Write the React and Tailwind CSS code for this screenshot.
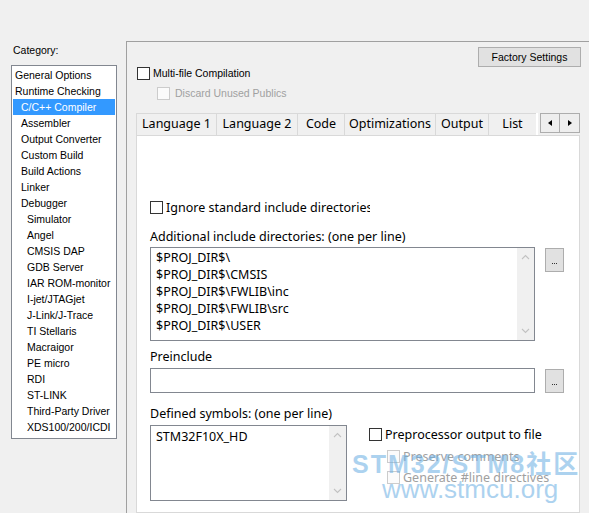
import React from 'react';

const categories = [
  { label: 'General Options', level: 0 },
  { label: 'Runtime Checking', level: 0 },
  { label: 'C/C++ Compiler', level: 1, selected: true },
  { label: 'Assembler', level: 1 },
  { label: 'Output Converter', level: 1 },
  { label: 'Custom Build', level: 1 },
  { label: 'Build Actions', level: 1 },
  { label: 'Linker', level: 1 },
  { label: 'Debugger', level: 1 },
  { label: 'Simulator', level: 2 },
  { label: 'Angel', level: 2 },
  { label: 'CMSIS DAP', level: 2 },
  { label: 'GDB Server', level: 2 },
  { label: 'IAR ROM-monitor', level: 2 },
  { label: 'I-jet/JTAGjet', level: 2 },
  { label: 'J-Link/J-Trace', level: 2 },
  { label: 'TI Stellaris', level: 2 },
  { label: 'Macraigor', level: 2 },
  { label: 'PE micro', level: 2 },
  { label: 'RDI', level: 2 },
  { label: 'ST-LINK', level: 2 },
  { label: 'Third-Party Driver', level: 2 },
  { label: 'XDS100/200/ICDI', level: 2 },
];

const tabs = [
  { label: 'Language 1', w: 'w-[80px]' },
  { label: 'Language 2', w: 'w-[81px]' },
  { label: 'Code', w: 'w-[47px]' },
  { label: 'Optimizations', w: 'w-[91px]' },
  { label: 'Output', w: 'w-[53px]' },
  { label: 'List', w: 'w-[48px]' },
];

const includeDirs = [
  '$PROJ_DIR$\\',
  '$PROJ_DIR$\\CMSIS',
  '$PROJ_DIR$\\FWLIB\\inc',
  '$PROJ_DIR$\\FWLIB\\src',
  '$PROJ_DIR$\\USER',
];

const indent = ['pl-[2px]', 'pl-[8px]', 'pl-[14px]'];

const Box = ({ disabled }) => (
  <span
    className={
      disabled
        ? 'block w-[13px] h-[13px] shrink-0 border border-[#cccccc] bg-[#fbfbfb]'
        : 'block w-[13px] h-[13px] shrink-0 border border-[#333333] bg-white'
    }
  />
);

const Chevron = ({ up }) => (
  <svg width="9" height="6" viewBox="0 0 9 6">
    <polyline
      points={up ? '1,5 4.5,1.5 8,5' : '1,1 4.5,4.5 8,1'}
      fill="none"
      stroke="#c2c2c2"
      strokeWidth="1.1"
    />
  </svg>
);

const ScrollBar = () => (
  <div className="w-[17px] h-full bg-[#f0f0f0] flex flex-col items-center justify-between py-[6px]">
    <Chevron up />
    <Chevron />
  </div>
);

// the browse button with its three small dots
const DotsButton = () => (
  <button className="w-[19px] h-[24px] shrink-0 border border-[#adadad] bg-[#e1e1e1] flex items-end justify-center gap-[1px] pb-[7px]">
    <span className="block w-[1px] h-[1px] bg-[#333]" />
    <span className="block w-[1px] h-[1px] bg-[#333]" />
    <span className="block w-[1px] h-[1px] bg-[#333]" />
  </button>
);

const App = () => {
  return (
    <div className="relative w-[589px] h-[513px] overflow-hidden bg-[#f0f0f0] flex font-['Liberation_Sans',Arial,sans-serif] text-black">
      {/* category list */}
      <div className="w-[126px] shrink-0 pl-[11px] pt-[43px]">
        <div className="text-[10.5px] h-[14px] leading-[14px] pl-[2px]">Category:</div>
        <div className="mt-[8px] w-[106px] h-[374px] border border-[#828790] bg-white pt-[1px] px-[1px]">
          {categories.map((c) => (
            <div
              key={c.label}
              className={`h-[16px] leading-[16px] text-[10.5px] whitespace-nowrap ${indent[c.level]} ${
                c.selected ? 'bg-[#3399ff] text-white' : ''
              }`}
            >
              {c.label}
            </div>
          ))}
        </div>
      </div>

      {/* options panel */}
      <div className="mt-[41px] w-[463px] shrink-0 border-l border-t border-[#a0a0a0] flex flex-col">
        <div className="flex justify-end pr-[8px] pt-[5px]">
          <button className="w-[103px] h-[20px] border border-[#adadad] bg-[#e1e1e1] text-[10.5px] leading-[18px]">
            Factory Settings
          </button>
        </div>

        <div className="flex items-center gap-[3px] pl-[10px] h-[13px]">
          <Box />
          <span className="text-[10.5px]">Multi-file Compilation</span>
        </div>
        <div className="flex items-center gap-[5px] pl-[30px] h-[13px] mt-[7px]">
          <Box disabled />
          <span className="text-[10.5px] text-[#a0a0a0]">Discard Unused Publics</span>
        </div>

        {/* tabs */}
        <div className="flex items-start mt-[13px] pl-[9px] font-['Noto_Sans',sans-serif] text-[12.5px]">
          {tabs.map((t) => (
            <div
              key={t.label}
              className={`${t.w} h-[22px] border-t border-l border-[#d9d9d9] bg-[#f0f0f0] flex items-center justify-center whitespace-nowrap`}
            >
              {t.label}
            </div>
          ))}
          <div className="w-[2px] h-[22px] bg-white" />
          <div className="ml-[2px] flex h-[20px] border border-[#adadad]">
            <div className="w-[19px] flex items-center justify-center border-r border-[#adadad] bg-[#eeeeee]">
              <svg width="4" height="6" viewBox="0 0 4 6"><polygon points="4,0 0,3 4,6" fill="#000" /></svg>
            </div>
            <div className="w-[19px] flex items-center justify-center bg-[#eeeeee]">
              <svg width="4" height="6" viewBox="0 0 4 6"><polygon points="0,0 4,3 0,6" fill="#000" /></svg>
            </div>
          </div>
        </div>

        {/* tab page */}
        <div className="ml-[9px] w-[444px] flex-1 border border-[#d9d9d9] bg-white pl-[13px] font-['Noto_Sans',sans-serif] text-[12.5px]">
          <div className="flex items-center gap-[3px] mt-[65px] h-[13px]">
            <Box />
            <span className="w-[204px] overflow-hidden whitespace-nowrap leading-[16px]">
              Ignore standard include directories
            </span>
          </div>

          <div className="mt-[15px] h-[16px] leading-[16px]">Additional include directories: (one per line)</div>
          <div className="mt-[2px] flex items-start gap-[10px]">
            <div className="w-[385px] h-[94px] border border-[#828790] flex">
              <div className="flex-1 pl-[5px] pt-[1px]">
                {includeDirs.map((d) => (
                  <div key={d} className="h-[17px] leading-[17px]">{d}</div>
                ))}
              </div>
              <ScrollBar />
            </div>
            <div className="mt-[1px]">
              <DotsButton />
            </div>
          </div>

          <div className="mt-[8px] h-[16px] leading-[16px]">Preinclude</div>
          <div className="mt-[3px] flex items-start gap-[10px]">
            <div className="w-[385px] h-[25px] border border-[#828790]" />
            <div className="mt-[1px]">
              <DotsButton />
            </div>
          </div>

          <div className="mt-[13px] h-[16px] leading-[16px]">Defined symbols: (one per line)</div>
          <div className="mt-[3px] flex items-start gap-[22px]">
            <div className="w-[197px] h-[76px] border border-[#828790] flex">
              <div className="flex-1 pl-[5px] pt-[2px] leading-[17px]">STM32F10X_HD</div>
              <ScrollBar />
            </div>
            <div className="pt-[3px]">
              <div className="flex items-center gap-[3px] h-[13px]">
                <Box />
                <span className="leading-[16px]">Preprocessor output to file</span>
              </div>
              <div className="flex items-center gap-[3px] h-[13px] mt-[9px] ml-[18px]">
                <Box disabled />
                <span className="leading-[16px] text-[#a0a0a0]">Preserve comments</span>
              </div>
              <div className="flex items-center gap-[3px] h-[13px] mt-[8px] ml-[18px]">
                <Box disabled />
                <span className="leading-[16px] text-[#a0a0a0]">Generate #line directives</span>
              </div>
            </div>
          </div>
        </div>
      </div>

      {/* watermark */}
      <div className="absolute left-[352px] top-[449px] pointer-events-none text-[#6aaee3] opacity-55 font-['Liberation_Sans','Noto_Sans_CJK_SC',sans-serif]">
        <div className="text-[25px] font-bold leading-[30px] tracking-[2px] whitespace-nowrap">STM32/STM8社区</div>
        <div className="ml-[30px] -mt-[4px] text-[26px] leading-[28px] whitespace-nowrap">www.stmcu.org</div>
      </div>
    </div>
  );
};

export default App;
